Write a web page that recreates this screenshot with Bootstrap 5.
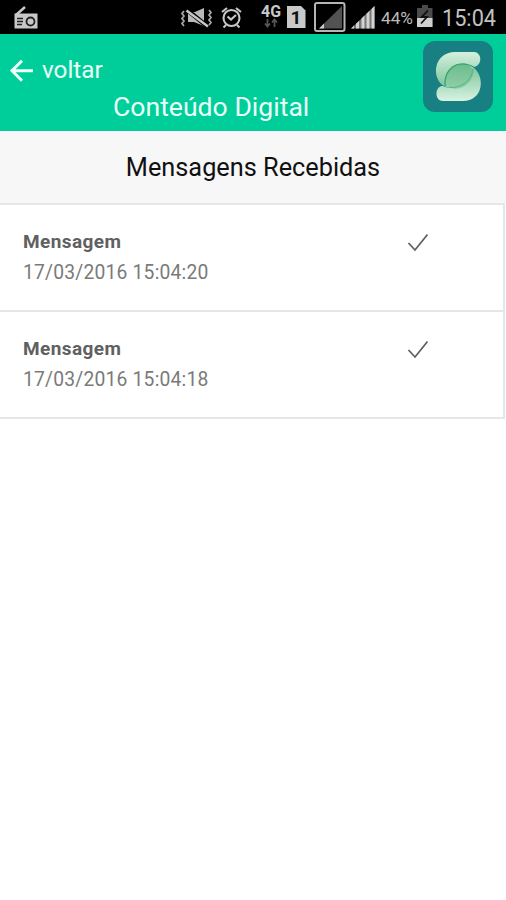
<!DOCTYPE html>
<html lang="pt-BR">
<head>
<meta charset="utf-8">
<meta name="viewport" content="width=device-width, initial-scale=1">
<title>Conteúdo Digital</title>
<link rel="stylesheet" href="https://cdn.jsdelivr.net/npm/bootstrap@5.3.0/dist/css/bootstrap.min.css">
<style>
body{font-family:Roboto,"Liberation Sans",sans-serif;color:#111;background:#fff}
svg{display:block;flex:none}
.status{height:34px;background:#000;color:#c4c4c4;padding-left:14px}
.status svg text{font-family:Roboto,"Liberation Sans",sans-serif}
.ic-mute{margin-left:141px}.ic-alarm{margin-left:8px}.ic-4g{margin-left:18px}
.ic-sim{margin-left:5px}.ic-box{margin-left:8px}.ic-sig{margin-left:4px}
.pct{margin-left:6px;width:31px}
.pct svg,.clock svg{overflow:visible}
.ic-bat{margin-left:5px}.clock{margin-left:9px;width:54px}
.app-head{height:97px;background:#00ce9a;color:#e9fff8;padding:0 13px 0 10px}
.back{color:inherit;font-size:24.3px;line-height:30px;margin-top:21px;gap:8px}
.page-name{font-size:26.6px;line-height:32px;margin:6px 0 0 103px;font-weight:400}
.logo{margin-top:7px}
.section-title{height:72px;background:#f7f7f7;font-size:25.3px;line-height:73px;font-weight:400;color:#111}
.msgs{border:0 solid #e6e6e6;border-top-width:2px;border-right-width:2px;margin-right:1px}
.msg{height:107px;border-bottom:2px solid #e6e6e6;padding:23px 75px 0 23px}
.msg h2{font-size:19px;line-height:27px;font-weight:700;color:#606060;margin:0;letter-spacing:.4px}
.msg time{font-size:19.3px;line-height:27px;color:#7a7a7a;margin-top:4px;letter-spacing:.2px}
.tick{margin-top:4px}
</style>
<script src="https://cdn.jsdelivr.net/npm/bootstrap@5.3.0/dist/js/bootstrap.bundle.min.js" defer></script>
</head>
<body>
<div class="status d-flex">
  <svg width="24" height="34" viewBox="14 0 24 34"><path d="M16 15L25 7" stroke="#c8c8c8" stroke-width="2.400"/><path d="M14.500 13.500H37.500V28.500H14.500Z" fill="#c8c8c8"/><path d="M17 18.500H23M17 21.500H23M17 24.500H22" stroke="#222" stroke-width="1.300"/><circle cx="30.500" cy="21.500" r="4" fill="#c8c8c8" stroke="#222" stroke-width="1.800"/></svg>
  <svg class="ic-mute" width="34" height="34" viewBox="180 0 34 34"><path d="M189 12H196L205 8V26L195 22H189Z" fill="#b9b9b9"/><path d="M187 9L209 27" stroke="#000" stroke-width="4.500"/><path d="M187.500 10.500L209 26.500" stroke="#c8c8c8" stroke-width="2.400"/><path d="M185 11L183 13.500L185 16L183 18.500L185 21L183 23.500L185 26M210 10L212 12.500L210 15L212 17.500L210 20L212 22.500L210 25" fill="none" stroke="#aaa" stroke-width="1.700"/></svg>
  <svg class="ic-alarm" width="22" height="34" viewBox="221 0 22 34"><g fill="none" stroke="#c8c8c8" stroke-width="2.100"><circle cx="231.500" cy="18" r="8"/><path d="M222 12L227 8M236 8L241 12M226 25L223.500 27.500M237 25L239.500 27.500M227.500 16.500L231 19.500L236 15"/></g></svg>
  <svg class="ic-4g" width="21" height="34" viewBox="261 0 21 34"><text x="261" y="16.500" font-size="16.500" font-weight="700" fill="#c9c9c9" textLength="20" lengthAdjust="spacingAndGlyphs">4G</text><path d="M267.500 19V26M265 23.500L267.500 26.500L270 23.500M274.500 27V20M272 22.500L274.500 19.500L277 22.500" fill="none" stroke="#555" stroke-width="1.800"/></svg>
  <svg class="ic-sim" width="19" height="34" viewBox="287 0 19 34"><path d="M287 6H301L305.500 10.500V28H287Z" fill="#c9c9c9"/><text x="296" y="24" text-anchor="middle" font-size="19" font-weight="700" fill="#111">1</text></svg>
  <svg class="ic-box" width="32" height="34" viewBox="314 0 32 34"><rect x="315" y="3" width="29.500" height="28" rx="2" fill="#000" stroke="#b5b5b5" stroke-width="2"/><path d="M319 28.500L342 6V28.500Z" fill="#525252"/><path d="M319 28.500L324 23.500V28.500Z" fill="#ccc"/></svg>
  <svg class="ic-sig" width="25" height="34" viewBox="350 0 25 34"><path d="M351 28.500L374.500 6V28.500Z" fill="#777"/><path d="M351 28.500L354 25.600V28.500ZM356 28.500V23.700L359 20.900V28.500ZM361.500 28.500V18.500L364.500 15.600V28.500ZM366.500 28.500V13.700L369.500 10.800V28.500ZM371.500 28.500V8.900L374.500 6V28.500Z" fill="#d2d2d2"/></svg>
  <div class="pct"><svg width="31" height="34"><text x="0" y="24" font-size="17" fill="#bbb" textLength="32" lengthAdjust="spacingAndGlyphs">44%</text></svg></div>
  <svg class="ic-bat" width="16" height="34" viewBox="417 0 16 34"><path d="M417 8H422V5H428V8H432.500V27H417Z" fill="#4b4b4b"/><path d="M417 18H432.500V27H417Z" fill="#cfcfcf"/><path d="M428 10.500L421.500 17H427L421 23.500" fill="none" stroke="#111" stroke-width="1.800"/></svg>
  <div class="clock"><svg width="54" height="34"><text x="0" y="26" font-size="24" fill="#c2c2c2" textLength="54" lengthAdjust="spacingAndGlyphs">15:04</text></svg></div>
</div>
<header class="app-head d-flex justify-content-between align-items-start">
  <div>
    <a href="#" class="back d-flex align-items-center text-decoration-none">
      <svg width="24" height="24" viewBox="0 0 24 24"><path d="M23 12.700H2M12 2.700L2 12.700L12 22.700" fill="none" stroke="#f1fffb" stroke-width="3"/></svg>
      <span>voltar</span>
    </a>
    <h1 class="page-name">Conteúdo Digital</h1>
  </div>
  <svg class="logo" width="70" height="71" viewBox="0 0 70 71">
    <defs>
      <linearGradient id="top" x1="0" y1="0" x2="0" y2="1"><stop offset="0" stop-color="#d5f0de"/><stop offset="1" stop-color="#7cc59b"/></linearGradient>
      <linearGradient id="low" x1="0" y1="0" x2="0" y2="1"><stop offset="0" stop-color="#74c195"/><stop offset="1" stop-color="#d8f2e1"/></linearGradient>
      <linearGradient id="mid" x1="0" y1="1" x2="1" y2="0"><stop offset="0" stop-color="#98d2ae"/><stop offset="1" stop-color="#62b987"/></linearGradient>
    </defs>
    <rect width="70" height="71" rx="12" fill="#187f82"/>
    <path d="M19 45C11.500 46 11.500 60 20 60H40C60 60 63 36 50 26L38 23L22 45Z" fill="url(#low)"/>
    <path d="M51 11C59 11 60 24.500 51 26L38 36L22 46C7 37 11 11 32 11Z" fill="url(#top)"/>
    <ellipse cx="36" cy="35" rx="15" ry="11.500" transform="rotate(-35 36 35)" fill="url(#mid)"/>
    <path d="M22 45C21 32 29 23 39 23C45 23 48 24 51 26.500" fill="none" stroke="#359f6a" stroke-width="1.200"/>
    <path d="M20 45C34 50 49 42 50 28" fill="none" stroke="#4bab76" stroke-width=".8"/>
  </svg>
</header>
<main>
  <div class="section-title text-center">Mensagens Recebidas</div>
  <div class="msgs">
    <div class="msg d-flex justify-content-between align-items-start">
      <div><h2>Mensagem</h2><time class="d-block">17/03/2016 15:04:20</time></div>
      <svg class="tick" width="21" height="20" viewBox="0 0 21 20"><path d="M1.500 11L8 18L20.500 2.500" fill="none" stroke="#606060" stroke-width="1.800"/></svg>
    </div>
    <div class="msg d-flex justify-content-between align-items-start">
      <div><h2>Mensagem</h2><time class="d-block">17/03/2016 15:04:18</time></div>
      <svg class="tick" width="21" height="20" viewBox="0 0 21 20"><path d="M1.500 11L8 18L20.500 2.500" fill="none" stroke="#606060" stroke-width="1.800"/></svg>
    </div>
  </div>
</main>
</body>
</html>
